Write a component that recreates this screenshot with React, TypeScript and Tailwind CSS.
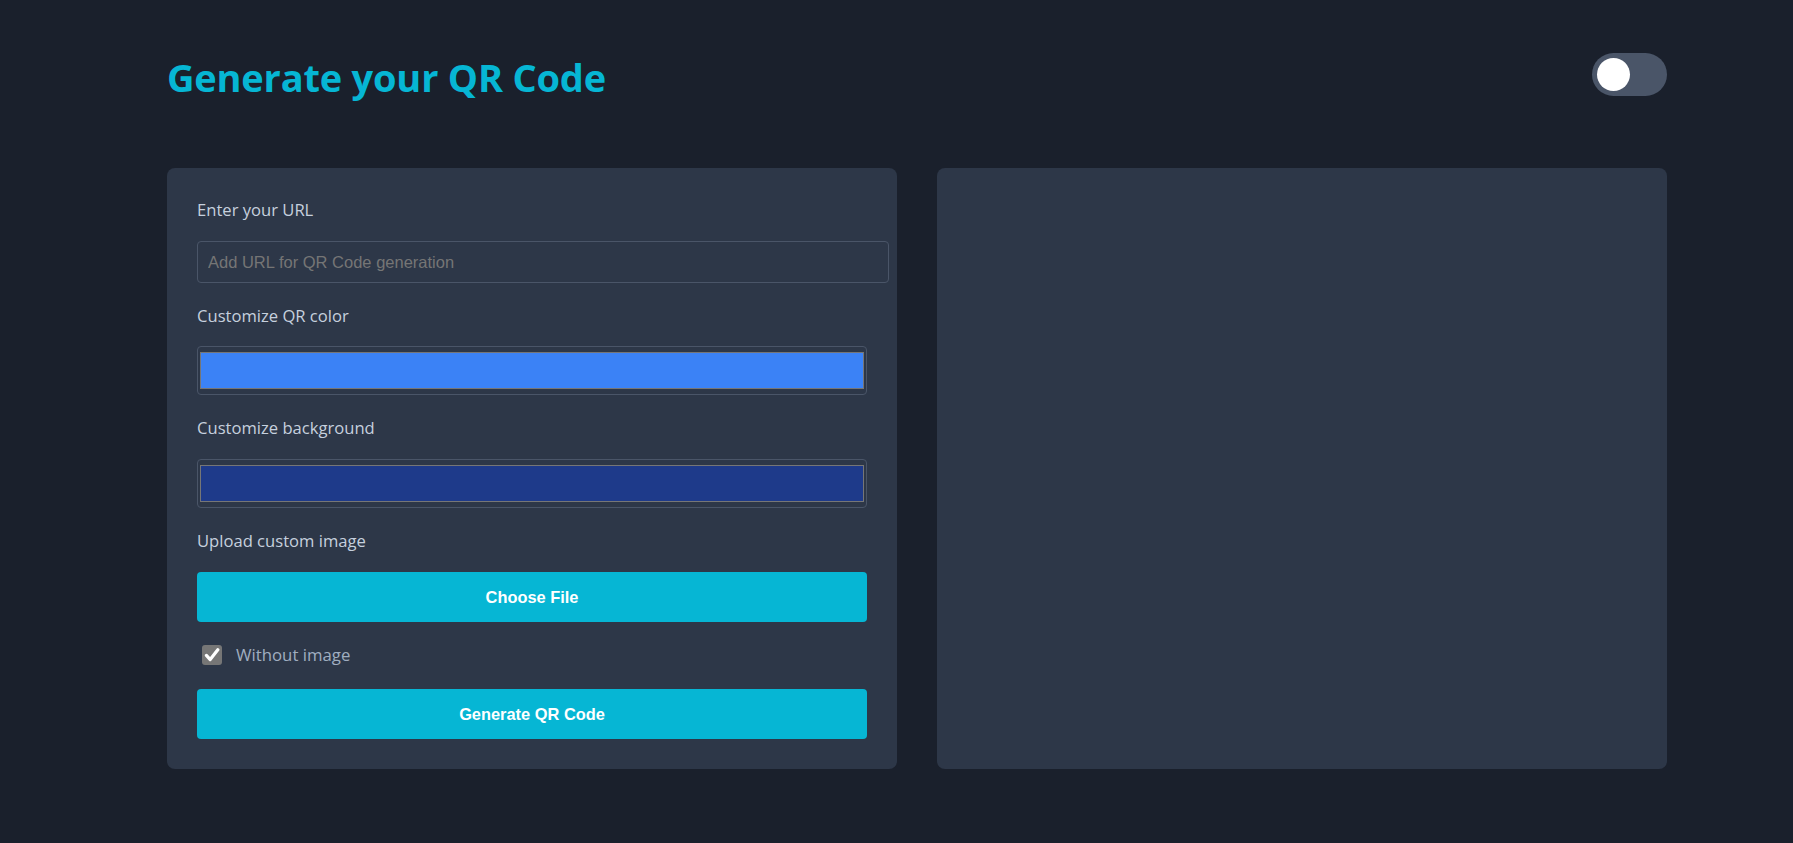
import { useState } from "react";

const labelClass = "block h-[24px] leading-[24px] text-[16.6px] text-[#c6d0de] font-['Open_Sans',sans-serif]";

function ColorField({ color }: { color: string }) {
	return (
		<div className="h-[49px] w-full rounded border border-[#4a5568] px-[2px] py-[5px]">
			<div className="h-full w-full border border-[#767676]" style={{ backgroundColor: color }} />
		</div>
	);
}

export default function App() {
	const [dark, setDark] = useState(false);
	const [withoutImage, setWithoutImage] = useState(true);
	const [url, setUrl] = useState("");

	return (
		<div className="min-h-screen bg-[#1a202c] pl-[167px] pt-[53px] font-['Open_Sans',sans-serif]">
			<div className="w-[1500px]">
				<header className="flex h-[43px] items-center justify-between">
					<h1 className="mt-[6px] text-[38px] font-bold tracking-[-0.2px] text-[#06b6d4]">
						Generate your QR Code
					</h1>
					<button
						onClick={() => setDark(!dark)}
						className="flex h-[43px] w-[75px] items-center rounded-full bg-[#4a5568] px-[4.5px]"
					>
						<span className="h-[33px] w-[33px] rounded-full bg-white" />
					</button>
				</header>

				<div className="mt-[72px] grid grid-cols-2 gap-10">
					<div className="flex flex-col rounded-lg bg-[#2d3748] p-[30px]">
						<label className={labelClass}>Enter your URL</label>
						<input
							value={url}
							onChange={(e) => setUrl(e.target.value)}
							placeholder="Add URL for QR Code generation"
							className="mt-[19px] h-[42px] w-[calc(100%+22px)] rounded border border-[#4a5568] bg-transparent px-[10px] font-['Liberation_Sans',Arial,sans-serif] text-[16.5px] text-[#cbd5e0] outline-none placeholder:text-[#757575]"
						/>

						<label className={`${labelClass} mt-[21px]`}>Customize QR color</label>
						<div className="mt-[18px]">
							<ColorField color="#3b82f6" />
						</div>

						<label className={`${labelClass} mt-[21px]`}>Customize background</label>
						<div className="mt-[19px]">
							<ColorField color="#1e3a8a" />
						</div>

						<label className={`${labelClass} mt-[21px]`}>Upload custom image</label>
						<button className="mt-[19px] h-[50px] w-full rounded bg-[#06b6d4] font-['Liberation_Sans',Arial,sans-serif] text-[16.4px] font-bold text-white">
							Choose File
						</button>

						<label className="mt-[23px] flex h-[20px] cursor-pointer items-center pl-[5px]">
							<span
								onClick={() => setWithoutImage(!withoutImage)}
								className="flex h-[20px] w-[20px] items-center justify-center rounded-[3px] bg-[#767676]"
							>
								{withoutImage && (
									<svg width="16" height="16" viewBox="0 0 16 16">
										<path d="M2.4 8.4 L6.2 12.6 L13.8 2.8" fill="none" stroke="white" strokeWidth="3.2" strokeLinecap="round" strokeLinejoin="round" />
									</svg>
								)}
							</span>
							<span className="ml-[14px] text-[16.8px] leading-[20px] text-[#a0aec0]">Without image</span>
						</label>

						<button className="mt-[24px] h-[50px] w-full rounded bg-[#06b6d4] font-['Liberation_Sans',Arial,sans-serif] text-[16.4px] font-bold text-white">
							Generate QR Code
						</button>
					</div>

					<div className="rounded-lg bg-[#2d3748]" />
				</div>
			</div>
		</div>
	);
}
